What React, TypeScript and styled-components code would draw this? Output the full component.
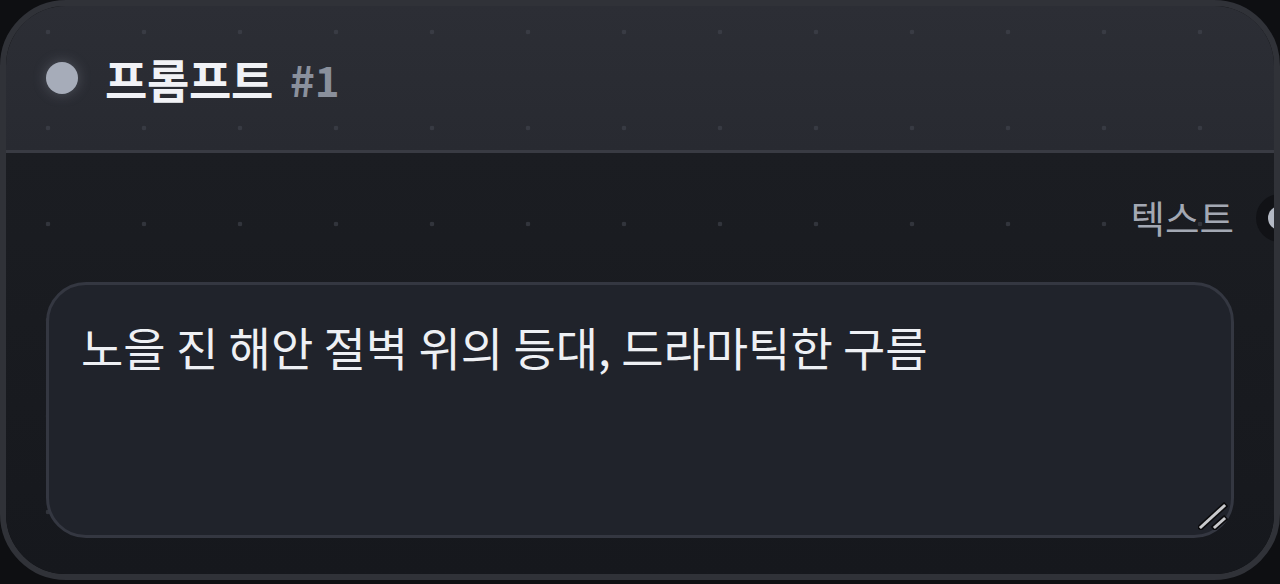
import styled, { createGlobalStyle } from 'styled-components'

const GlobalStyle = createGlobalStyle`
  html, body {
    margin: 0;
    padding: 0;
    background: #0e0f12;
    overflow: hidden;
  }
  body {
    font-family: "Noto Sans CJK KR", "Noto Sans", sans-serif;
  }
`

const dotLayer = 'radial-gradient(circle at center, rgba(66, 69, 78, 0.6) 0 2px, transparent 2.6px)'

const App = () => {
  return (
    <>
      <GlobalStyle />
      <Node>
        <Header>
          <StatusDot />
          <Title>프롬프트</Title>
          <NodeId>#1</NodeId>
        </Header>
        <Body>
          <OutputRow>
            <OutputLabel>텍스트</OutputLabel>
            <Port />
          </OutputRow>
          <PromptBox>
            <PromptInput defaultValue="노을 진 해안 절벽 위의 등대, 드라마틱한 구름" spellCheck={false} />
            <ResizeGrip viewBox="0 0 30 28" width="30" height="28">
              <g strokeLinecap="square">
                <line x1="3" y1="25" x2="26" y2="4" stroke="#0b0b0d" strokeWidth="6" />
                <line x1="17" y1="25" x2="26" y2="17" stroke="#0b0b0d" strokeWidth="6" />
                <line x1="3" y1="25" x2="26" y2="4" stroke="#c9cacd" strokeWidth="3" />
                <line x1="17" y1="25" x2="26" y2="17" stroke="#c9cacd" strokeWidth="3" />
              </g>
            </ResizeGrip>
          </PromptBox>
        </Body>
      </Node>
    </>
  )
}

const Node = styled.div`
  position: relative;
  box-sizing: border-box;
  width: 1280px;
  height: 580px;
  border: 6px solid #303238;
  border-radius: 66px;
  display: flex;
  flex-direction: column;
  overflow: hidden;
  box-shadow: inset 0 2px 0 rgba(255, 255, 255, 0.06);
`

const Header = styled.div`
  flex: 0 0 144px;
  display: flex;
  align-items: center;
  padding-left: 40px;
  border-bottom: 3px solid #393b43;
  background-image: ${dotLayer}, linear-gradient(#2c2e35, #282a31);
  background-size: 96px 96px, 100% 100%;
  background-position: -6px -22px, 0 0;
`

const StatusDot = styled.span`
  width: 32px;
  height: 32px;
  border-radius: 50%;
  background: #a6acb9;
  box-shadow: 0 0 14px rgba(170, 176, 190, 0.3);
  margin-right: 27px;
`

const Title = styled.span`
  font-size: 46px;
  font-weight: 700;
  color: #f1f2f6;
  letter-spacing: -0.3px;
  margin-right: 17px;
`

const NodeId = styled.span`
  font-size: 42px;
  font-weight: 600;
  color: #8a909c;
`

const Body = styled.div`
  flex: 1;
  display: flex;
  flex-direction: column;
  padding: 0 40px 36px;
  background-image: ${dotLayer}, linear-gradient(#1b1d22, #16181d);
  background-size: 96px 96px, 100% 100%;
  background-position: -6px 23px, 0 0;
`

const OutputRow = styled.div`
  position: relative;
  height: 129px;
  display: flex;
  align-items: center;
  justify-content: flex-end;
`

const OutputLabel = styled.span`
  font-size: 37.5px;
  color: #a3a8b3;
  margin-top: -2px;
`

const Port = styled.span`
  position: absolute;
  right: -70px;
  top: 50%;
  width: 48px;
  height: 48px;
  margin-top: -24px;
  border-radius: 50%;
  background: #111216;
  display: flex;
  align-items: center;
  justify-content: center;

  &::after {
    content: '';
    width: 24px;
    height: 24px;
    border-radius: 50%;
    background: #b4b9c4;
  }
`

const PromptBox = styled.div`
  position: relative;
  flex: 1;
  display: flex;
`

const PromptInput = styled.textarea`
  flex: 1;
  box-sizing: border-box;
  margin: 0;
  padding: 29px 32px;
  border: 3px solid #343741;
  border-radius: 40px;
  background: #20232b;
  color: #eef0f4;
  font-family: "Noto Sans CJK KR", "Noto Sans", sans-serif;
  font-size: 46px;
  line-height: 1.4;
  resize: none;
  outline: none;
`

const ResizeGrip = styled.svg`
  position: absolute;
  right: 6px;
  bottom: 8px;
  pointer-events: none;
`

export default App
